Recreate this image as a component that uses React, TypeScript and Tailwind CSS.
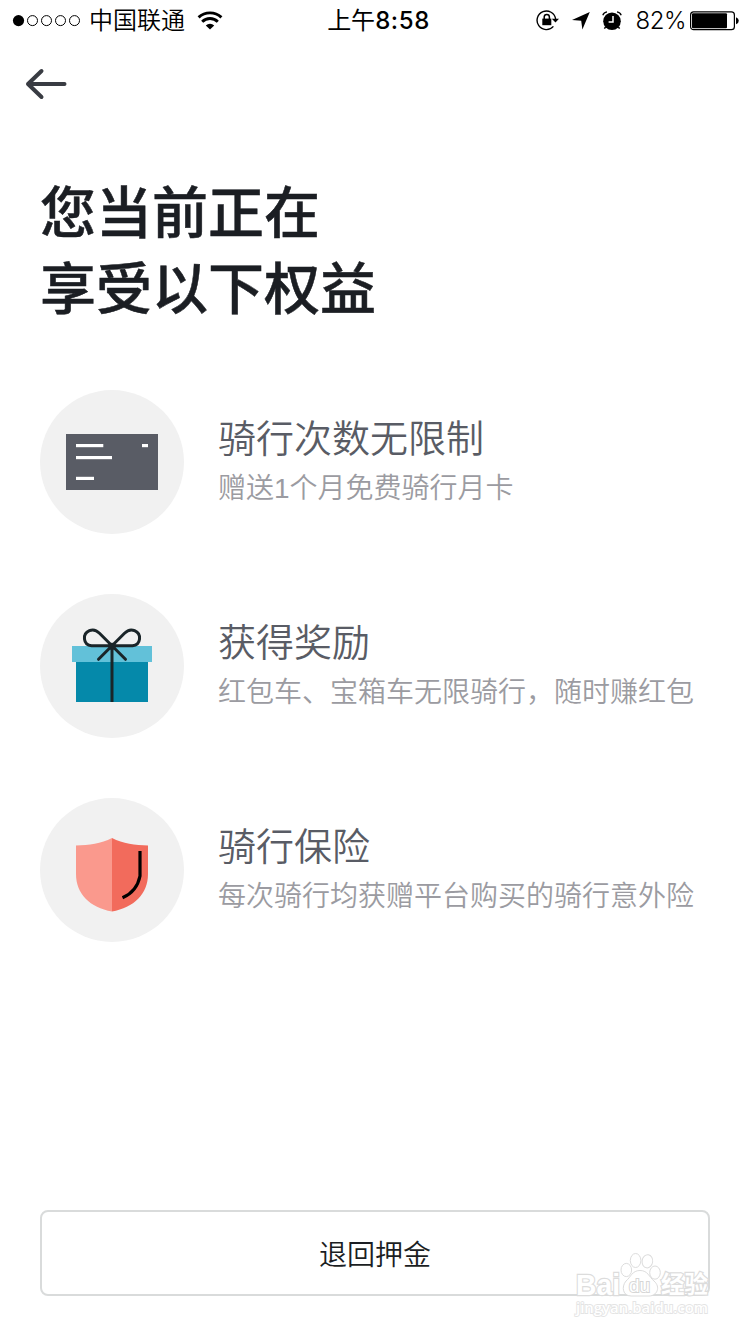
import type { ReactNode } from "react";

function SignalDots() {
  return (
    <svg width="70" height="14" viewBox="0 0 70 14" fill="none" stroke="#000">
      <circle cx="6.5" cy="6.6" r="5.6" fill="#000" stroke="none" />
      <circle cx="20.5" cy="6.6" r="5" />
      <circle cx="34.5" cy="6.6" r="5" />
      <circle cx="48.5" cy="6.6" r="5" />
      <circle cx="62.5" cy="6.6" r="5" />
    </svg>
  );
}

function Wifi() {
  return (
    <svg width="26" height="20" viewBox="0 0 26 20" fill="none" stroke="#000" strokeWidth="2.9">
      <path d="M1.6 6.4 A16.6 16.6 0 0 1 24.4 6.4" />
      <path d="M5.2 10.8 A11 11 0 0 1 20.8 10.8" />
      <path d="M13 18.6 L8.8 14.4 A6 6 0 0 1 17.2 14.4 Z" fill="#000" stroke="none" />
    </svg>
  );
}

function RotationLock() {
  return (
    <svg width="24" height="22" viewBox="0 0 24 22" fill="none" stroke="#000" strokeWidth="1.4">
      <path d="M19.6 9 A9.3 9.3 0 1 0 17.4 16.4" />
      <path d="M15.8 8.8 L23 8.8 L19.5 12.6 Z" fill="#000" stroke="none" />
      <rect x="6.3" y="8.6" width="9" height="6.6" fill="#000" stroke="none" />
      <path d="M8.2 9.2 V7.1 A2.6 2.6 0 0 1 13.4 7.1 V9.2" strokeWidth="1.5" />
    </svg>
  );
}

function LocationArrow() {
  return (
    <svg width="18" height="18" viewBox="0 0 18 18">
      <path d="M17.8 0 L10.4 17.6 L9.2 8.8 L0 8 Z" />
    </svg>
  );
}

function AlarmClock() {
  return (
    <svg width="20" height="20" viewBox="0 0 20 20" fill="none">
      <circle cx="10" cy="10.2" r="8.8" fill="#000" />
      <path d="M0.8 4.2 A5 5 0 0 1 5 0.8" stroke="#000" strokeWidth="1.3" />
      <path d="M15 0.8 A5 5 0 0 1 19.2 4.2" stroke="#000" strokeWidth="1.3" />
      <path d="M3.6 16 L2.4 17.6 M16.4 16 L17.6 17.6" stroke="#000" strokeWidth="1.5" />
      <path d="M11 5 V11 H6.6" stroke="#fff" strokeWidth="1.5" />
    </svg>
  );
}

function Battery() {
  return (
    <svg width="49" height="20" viewBox="0 0 49 20">
      <rect x="0.6" y="0.9" width="43.8" height="17.8" rx="3" fill="none" stroke="#000" strokeWidth="1.2" />
      <rect x="2" y="2.3" width="35" height="15" rx="1" />
      <path d="M46 6.3 Q48.8 7.3 48.8 9.8 Q48.8 12.3 46 13.3 Z" />
    </svg>
  );
}

function CardIcon() {
  return (
    <svg width="144" height="144" viewBox="0 0 144 144">
      <rect x="26" y="44" width="92" height="56" fill="#595c65" />
      <g fill="#fff">
        <rect x="36" y="54" width="27.3" height="3.2" />
        <rect x="102" y="54" width="6" height="3.2" />
        <rect x="36" y="66" width="36" height="3.2" />
        <rect x="36" y="86.8" width="18" height="3.2" />
      </g>
    </svg>
  );
}

function GiftIcon() {
  return (
    <svg width="144" height="144" viewBox="0 0 144 144">
      <rect x="36" y="68" width="72" height="40" fill="#0589aa" />
      <rect x="32" y="52" width="80" height="16" fill="#62c1d9" />
      <g fill="none" stroke="#1a2529" strokeWidth="3" strokeLinecap="round">
        <path d="M72 52 V108" strokeLinecap="butt" />
        <path d="M85.5 65.3 L59.5 39.3 C56.6 36.3 52.8 35.2 49.4 36.7 C42 39.8 43 51 51.5 51.8 H72" />
        <path d="M58.5 65.3 L84.5 39.3 C87.4 36.3 91.2 35.2 94.6 36.7 C102 39.8 101 51 92.5 51.8 H72" />
      </g>
      <circle cx="72" cy="52.3" r="3.6" fill="#1a2529" />
    </svg>
  );
}

function ShieldIcon() {
  return (
    <svg width="144" height="144" viewBox="0 0 144 144">
      <path d="M72 40 C61 45.8 49 47.2 36 47.5 V76 C36 96 50 109.5 72 113.5 Z" fill="#fa998d" />
      <path d="M72 40 C83 45.8 95 47.2 108 47.5 V76 C108 96 94 109.5 72 113.5 Z" fill="#f26b5c" />
      <path d="M100 53 V78 C98 88 92.5 95.5 82.5 99.8" fill="none" stroke="#000" strokeWidth="3.2" />
    </svg>
  );
}

function Benefit({ icon, title, detail }: { icon: ReactNode; title: string; detail: string }) {
  return (
    <li className="flex h-36 gap-[34px]">
      <div className="size-36 shrink-0 rounded-full bg-[#f1f1f1]">{icon}</div>
      <div className="flex flex-col whitespace-nowrap pt-[21px] font-['Liberation_Sans','Noto_Sans_CJK_SC',sans-serif] font-[350]">
        <h2 className="text-[38px] leading-[56px] text-[#595c65]">{title}</h2>
        <p className="text-[28px] leading-[44px] text-[#9b9ba1]">{detail}</p>
      </div>
    </li>
  );
}

function Watermark() {
  return (
    <svg
      className="pointer-events-none absolute bottom-0 right-0"
      width="190"
      height="90"
      viewBox="560 1244 190 90"
      fill="#fff"
      stroke="#dcdcdc"
      strokeWidth="1"
      fontFamily="'Liberation Sans', 'Noto Sans CJK SC', sans-serif"
    >
      <g paintOrder="stroke" strokeWidth="2.4" fontWeight="700">
        <text x="576" y="1294.5" fontSize="30" textLength="44" lengthAdjust="spacingAndGlyphs">Bai</text>
        <text x="661" y="1293" fontSize="24" textLength="47" lengthAdjust="spacingAndGlyphs">经验</text>
      </g>
      <ellipse cx="626.3" cy="1270" rx="5.3" ry="6.6" />
      <ellipse cx="635.6" cy="1260.5" rx="5.3" ry="7" />
      <ellipse cx="647.4" cy="1261.3" rx="5.3" ry="6.6" transform="rotate(8 647.4 1261.3)" />
      <ellipse cx="655" cy="1272.6" rx="5.3" ry="6.6" />
      <path d="M640 1270.5 C648 1270.5 649 1277 654 1281 C661 1287 657 1296 649 1296 H631 C623 1296 621 1287 626 1281 C631 1277 632 1270.5 640 1270.5 Z" />
      <text x="629" y="1292" fontSize="19" textLength="21" lengthAdjust="spacingAndGlyphs" paintOrder="stroke" strokeWidth="2" stroke="#d6d6d6">du</text>
      <text
        x="576"
        y="1313"
        fontSize="15"
        textLength="132"
        lengthAdjust="spacingAndGlyphs"
        paintOrder="stroke"
        strokeWidth="1.8"
        stroke="#e4e4e4"
        fontWeight="600"
        fontFamily="'Open Sans', sans-serif"
      >
        jingyan.baidu.com
      </text>
    </svg>
  );
}

export default function App() {
  return (
    <main className="relative flex h-[1334px] w-[750px] flex-col overflow-hidden bg-white font-['Inter','Noto_Sans_CJK_SC',sans-serif]">
      <header className="grid h-10 shrink-0 grid-cols-[1fr_auto_1fr] items-center pl-3 pr-[11px] pt-px text-2xl leading-[39px] text-black">
        <div className="flex items-center">
          <SignalDots />
          <span className="ml-[7px] mr-3 font-[350]">中国联通</span>
          <Wifi />
        </div>
        <time className="pl-1.5"><span>上午</span><span className="font-medium tracking-[0.6px]">8:58</span></time>
        <div className="flex items-center justify-end">
          <RotationLock />
          <span className="ml-3"><LocationArrow /></span>
          <span className="ml-3"><AlarmClock /></span>
          <span className="ml-3.5 mr-1 font-[350] tracking-[-0.5px]">82%</span>
          <Battery />
        </div>
      </header>

      <nav className="flex h-[88px] shrink-0 items-center pl-6">
        <button aria-label="返回">
          <svg width="44" height="34" viewBox="0 0 44 34" fill="none" stroke="#393c43" strokeWidth="4" strokeLinecap="round" strokeLinejoin="round">
            <path d="M40.5 17 H4 M17.5 4 L4 17 L17.5 30" />
          </svg>
        </button>
      </nav>

      <h1 className="mt-[47px] px-10 text-[56px] font-medium leading-[76px] text-[#1b1e23] [-webkit-text-stroke:0.5px_#1b1e23]">
        您当前正在
        <br />
        享受以下权益
      </h1>

      <ul className="mt-[63px] flex flex-col gap-[60px] pl-10">
        <Benefit icon={<CardIcon />} title="骑行次数无限制" detail="赠送1个月免费骑行月卡" />
        <Benefit icon={<GiftIcon />} title="获得奖励" detail="红包车、宝箱车无限骑行，随时赚红包" />
        <Benefit icon={<ShieldIcon />} title="骑行保险" detail="每次骑行均获赠平台购买的骑行意外险" />
      </ul>

      <footer className="mt-auto px-10 pb-[38px]">
        <button className="h-[86px] w-full rounded-lg border-2 border-[#d9dbdb] pt-1 text-[28px] font-[350] text-[#1b1e23]">
          退回押金
        </button>
      </footer>
      <Watermark />
    </main>
  );
}
